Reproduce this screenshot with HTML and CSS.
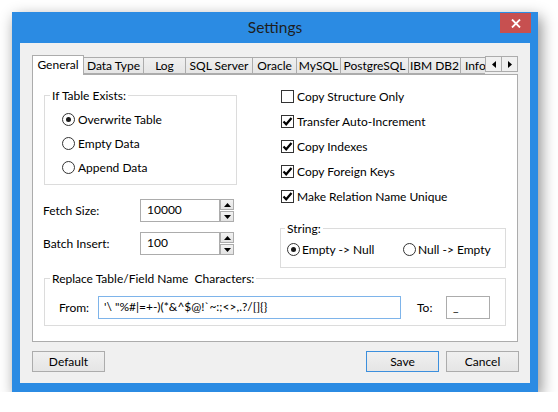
FILE: index.html
```html
<!DOCTYPE html>
<html>
<head>
<meta charset="utf-8">
<title>Settings</title>
<link rel="stylesheet" href="styles.css">
</head>
<body>
<div class="window">
  <div class="titlebar">
    <span></span>
    <span class="title">Settings</span>
    <span class="close"><svg width="10" height="9" viewBox="0 0 10 9"><path d="M1 0.5L9 8.5M9 0.5L1 8.5" stroke="#fff" stroke-width="1.8"/></svg></span>
  </div>
  <div class="client">
    <div class="tabstrip">
      <div class="tabs-clip">
        <div class="tab active">General</div>
        <div class="tab t-data">Data Type</div>
        <div class="tab t-log">Log</div>
        <div class="tab t-sql">SQL Server</div>
        <div class="tab t-ora">Oracle</div>
        <div class="tab t-my">MySQL</div>
        <div class="tab t-pg">PostgreSQL</div>
        <div class="tab t-db2">IBM DB2</div>
        <div class="tab t-info">Info</div>
      </div>
      <div class="tab-arrows">
        <span class="arrow"><svg width="4" height="7" viewBox="0 0 4 7"><path d="M4 0V7L0 3.5Z"/></svg></span>
        <span class="arrow"><svg width="4" height="7" viewBox="0 0 4 7"><path d="M0 0V7L4 3.5Z"/></svg></span>
      </div>
    </div>
    <div class="panel">
      <div class="top">
        <div class="col-left">
          <div class="group g-exists">
            <div class="legend">If Table Exists:</div>
            <div class="opts">
              <div class="opt"><span class="radio checked"></span>Overwrite Table</div>
              <div class="opt"><span class="radio"></span>Empty Data</div>
              <div class="opt"><span class="radio"></span>Append Data</div>
            </div>
          </div>
          <div class="field f-fetch">
            <span class="flabel">Fetch Size:</span>
            <span class="num">10000</span>
            <span class="spin">
              <span class="sbtn"><svg width="7" height="4" viewBox="0 0 7 4"><path d="M0 4H7L3.5 0Z"/></svg></span>
              <span class="sbtn"><svg width="7" height="4" viewBox="0 0 7 4"><path d="M0 0H7L3.5 4Z"/></svg></span>
            </span>
          </div>
          <div class="field f-batch">
            <span class="flabel">Batch Insert:</span>
            <span class="num">100</span>
            <span class="spin">
              <span class="sbtn"><svg width="7" height="4" viewBox="0 0 7 4"><path d="M0 4H7L3.5 0Z"/></svg></span>
              <span class="sbtn"><svg width="7" height="4" viewBox="0 0 7 4"><path d="M0 0H7L3.5 4Z"/></svg></span>
            </span>
          </div>
        </div>
        <div class="col-right">
          <div class="chk"><span class="box"></span>Copy Structure Only</div>
          <div class="chk"><span class="box"><svg width="11" height="11" viewBox="0 0 11 11"><path d="M1.5 5.5L4.2 8.3L9.5 2" fill="none" stroke="#000" stroke-width="2.2"/></svg></span>Transfer Auto-Increment</div>
          <div class="chk"><span class="box"><svg width="11" height="11" viewBox="0 0 11 11"><path d="M1.5 5.5L4.2 8.3L9.5 2" fill="none" stroke="#000" stroke-width="2.2"/></svg></span>Copy Indexes</div>
          <div class="chk"><span class="box"><svg width="11" height="11" viewBox="0 0 11 11"><path d="M1.5 5.5L4.2 8.3L9.5 2" fill="none" stroke="#000" stroke-width="2.2"/></svg></span>Copy Foreign Keys</div>
          <div class="chk"><span class="box"><svg width="11" height="11" viewBox="0 0 11 11"><path d="M1.5 5.5L4.2 8.3L9.5 2" fill="none" stroke="#000" stroke-width="2.2"/></svg></span>Make Relation Name Unique</div>
          <div class="group g-string">
            <div class="legend">String:</div>
            <div class="srow">
              <div class="opt first"><span class="radio checked"></span>Empty -&gt; Null</div>
              <div class="opt"><span class="radio"></span>Null -&gt; Empty</div>
            </div>
          </div>
        </div>
      </div>
      <div class="group g-replace">
        <div class="legend">Replace Table/Field Name&nbsp; Characters:</div>
        <div class="rrow">
          <span class="rlabel from">From:</span>
          <span class="text from-input">'\ "%#|=+-)(*&amp;^$@!`~:;&lt;&gt;,.?/[]{}</span>
          <span class="rlabel to">To:</span>
          <span class="text to-input">_</span>
        </div>
      </div>
    </div>
    <div class="buttons">
      <span class="btn">Default</span>
      <span class="spacer"></span>
      <span class="btn primary">Save</span>
      <span class="btn">Cancel</span>
    </div>
  </div>
</div>
</body>
</html>
```

FILE: styles.css
```css
* { box-sizing: border-box; }
html, body { margin: 0; padding: 0; background: #fff; }
body {
  padding: 12px 0 0 12px;
  font-family: Lato, "Open Sans", sans-serif;
  font-size: 12px;
  color: #000;
}
.window {
  width: 526px;
  height: 380px;
  background: #2b8be3;
  padding: 0 8px 9px 8px;
  box-shadow: 3px 5px 14px rgba(0,0,0,0.45);
}
.titlebar {
  height: 31px;
  display: grid;
  grid-template-columns: 1fr auto 1fr;
  margin: 0 -1px;
}
.title {
  line-height: 31px;
  font-size: 15.5px;
  color: #1e1e1e;
}
.close {
  justify-self: end;
  margin-top: 1px;
  width: 31px;
  height: 20px;
  background: #c75050;
  display: flex;
  align-items: center;
  justify-content: center;
}
.client {
  height: 340px;
  background: #f0f0f0;
  padding: 12px 12px 0 12px;
}
.tabstrip {
  display: flex;
  height: 20px;
  position: relative;
  z-index: 1;
}
.tabs-clip {
  width: 454px;
  display: flex;
  align-items: flex-end;
  overflow: hidden;
}
.tab {
  flex: none;
  height: 17px;
  margin-bottom: 1px;
  margin-left: -1px;
  padding: 0;
  text-align: center;
  line-height: 15px;
  border: 1px solid #acacac;
  background: linear-gradient(#f0f0f0, #e5e5e5);
  white-space: nowrap;
}
.tab:first-child { margin-left: 0; }
.t-data { width: 61px; }
.t-log { width: 43px; }
.t-sql { width: 68px; }
.t-ora { width: 45px; }
.t-my { width: 45px; }
.t-pg { width: 69px; }
.t-db2 { width: 53px; }
.t-info { width: 40px; text-align: left; padding-left: 4px; }
.tab.active {
  height: 20px;
  margin-bottom: 0;
  width: 52px;
  line-height: 18px;
  border-bottom: none;
  background: #fff;
  position: relative;
  z-index: 1;
}
.tab-arrows {
  display: flex;
  margin-top: 1px;
  height: 16px;
}
.arrow {
  width: 17px;
  height: 16px;
  border: 1px solid #acacac;
  background: #f0f0f0;
  display: flex;
  align-items: center;
  justify-content: center;
  margin-left: -1px;
}
.arrow:first-child { margin-left: 0; }
.panel {
  margin-top: -1px;
  height: 268px;
  background: #fff;
  border: 1px solid #acacac;
  padding: 9px 11px 0 11px;
}
.top {
  display: flex;
  align-items: flex-start;
}
.col-left { width: 236px; }
.col-right { width: 226px; }
.group {
  border: 1px solid #dcdcdc;
}
.legend {
  display: table;
  background: #fff;
  padding: 0 2px;
  margin: -8px 0 0 5px;
  line-height: 15px;
}
.g-exists {
  margin-top: 11px;
  width: 193px;
  height: 90px;
}
.opts { padding: 4px 0 0 17px; }
.opt {
  height: 24px;
  display: flex;
  align-items: center;
}
.radio {
  width: 13px;
  height: 13px;
  border: 1px solid #333;
  border-radius: 50%;
  background: #fff;
  margin-right: 3px;
  display: flex;
  align-items: center;
  justify-content: center;
  flex: none;
}
.radio.checked::after {
  content: "";
  width: 5px;
  height: 5px;
  border-radius: 50%;
  background: #1a1a1a;
}
.field {
  display: flex;
  align-items: center;
  height: 23px;
  margin-left: -1px;
}
.f-fetch { margin-top: 14px; }
.f-batch { margin-top: 10px; }
.flabel { width: 97px; }
.num {
  width: 80px;
  height: 23px;
  border: 1px solid #acacac;
  padding: 0 0 2px 6px;
  line-height: 19px;
  background: #fff;
}
.spin {
  display: flex;
  flex-direction: column;
  gap: 1px;
}
.sbtn {
  width: 14px;
  height: 11px;
  border: 1px solid #acacac;
  background: linear-gradient(#f2f2f2, #e3e3e3);
  display: flex;
  align-items: center;
  justify-content: center;
}
.chk {
  height: 25px;
  display: flex;
  align-items: center;
  padding-left: 1px;
}
.box {
  width: 13px;
  height: 13px;
  border: 1px solid #333;
  background: #fff;
  margin-right: 3px;
  display: flex;
  align-items: center;
  justify-content: center;
  flex: none;
}
.g-string {
  margin-top: 19px;
  height: 40px;
}
.g-string .legend { margin-left: 4px; }
.srow {
  display: flex;
  padding: 1px 0 0 6px;
}
.srow .opt.first { width: 116px; }
.srow .radio { margin-right: 2px; }
.g-replace {
  margin-top: 10px;
  height: 48px;
}
.rrow {
  display: flex;
  align-items: center;
  margin-top: 10px;
  padding-left: 14px;
}
.rlabel.from { width: 39px; }
.rlabel.to { width: 29px; margin-left: 16px; }
.text {
  height: 23px;
  border: 1px solid #acacac;
  line-height: 19px;
  padding: 0 0 2px 5px;
  background: #fff;
  white-space: nowrap;
  overflow: hidden;
}
.from-input { width: 303px; border-color: #7eb4ea; }
.to-input { width: 44px; padding-left: 6px; }
.buttons {
  display: flex;
  gap: 7px;
  margin-top: 9px;
  margin-right: -1px;
}
.spacer { flex: 1; }
.btn {
  width: 73px;
  height: 21px;
  border: 1px solid #acacac;
  background: linear-gradient(#f0f0f0, #e5e5e5);
  text-align: center;
  line-height: 19px;
}
.btn.primary { border-color: #3c8fdd; }
```
